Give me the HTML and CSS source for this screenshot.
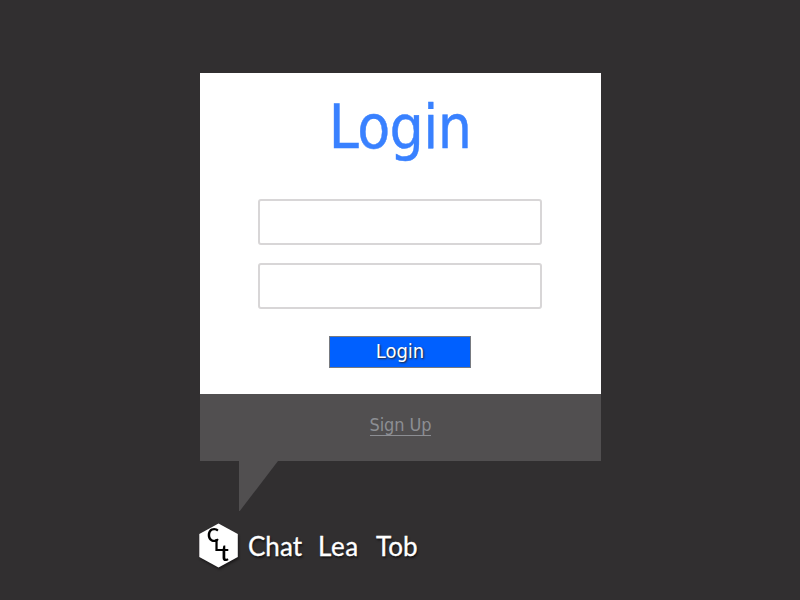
FILE: index.html
```html
<!DOCTYPE html>
<html lang="en">
<head>
<meta charset="utf-8">
<title>Chat Lea Tob</title>
<link rel="stylesheet" href="styles.css">
</head>
<body>
<main class="page">
  <section class="bubble">
    <form class="login">
      <h1 class="title">Login</h1>
      <input class="field" type="text" aria-label="Username">
      <input class="field" type="password" aria-label="Password">
      <button class="submit" type="button">Login</button>
    </form>
    <footer class="signup"><a class="signup-link" href="#">Sign Up</a></footer>
    <div class="tail"></div>
  </section>
  <div class="brand">
    <svg class="mark" width="44" height="50" viewBox="0 0 44 50">
      <polygon class="hex" points="19.5,0.5 38.8,11 38.8,34 19.5,44.5 0.3,34 0.3,11"/>
      <text class="mono"><tspan x="8" y="19" font-size="18">C</tspan><tspan x="15" y="28" font-size="17">L</tspan><tspan x="21.5" y="38" font-size="22">t</tspan></text>
    </svg>
    <div class="name"><span class="chat">Chat</span><span class="lea">Lea</span><span class="tob">Tob</span></div>
  </div>
</main>
</body>
</html>
```
FILE: styles.css
```css
* { box-sizing: border-box; }
body { margin: 0; background: #312f30; }
.page { height: 600px; padding: 73px 0 0 200px; overflow: hidden; }
.bubble { width: 401px; font-family: "DejaVu Sans Condensed", "DejaVu Sans", sans-serif; font-stretch: condensed; }
.login { height: 321px; padding-right: 1px; background: #fff; display: flex; flex-direction: column; align-items: center; }
.title { margin: 19px 0 0; height: 70px; line-height: 70px; font-size: 60px; font-weight: 400; letter-spacing: -0.6px; color: #3981ff; -webkit-text-stroke: 0.4px #3981ff; }
.field { width: 284px; height: 46px; margin: 37px 0 0; border: 2px solid #d8d6d7; border-radius: 3px; background: #fff; outline: 0; }
.field + .field { margin-top: 18px; }
.submit { width: 142px; height: 32px; margin: 27px 0 0; padding: 0 0 2px; border: 1px solid #777a80; border-radius: 0; background: #0060ff; color: #fff; font: inherit; font-size: 20px; text-shadow: 1px 1px 2px #222; }
.signup { height: 67px; background: #514f50; text-align: center; padding-top: 20px; line-height: 22px; }
.signup-link { display: inline-block; height: 22px; font-size: 18px; letter-spacing: -0.1px; color: #8c8e93; text-decoration: none; border-bottom: 1px solid #8c8e93; }
.tail { width: 39px; height: 50px; margin-left: 39px; background: #514f50; clip-path: polygon(0 0, 100% 0, 2% 100%, 0 100%); }
.brand { display: flex; margin: 12px 0 0 -1px; }
.mark { flex: none; filter: drop-shadow(1px 2px 1px #1b191a); }
.hex { fill: #fff; }
.mono { font-family: Lato, sans-serif; font-weight: 700; fill: #000; }
.name { display: flex; margin-left: 5px; font: 400 26px/46px Lato, sans-serif; color: #fff; -webkit-text-stroke: 0.3px #fff; text-shadow: 1px 2px 2px #151314; }
.chat { width: 70px; }
.lea { width: 58px; letter-spacing: 0.5px; }
```
